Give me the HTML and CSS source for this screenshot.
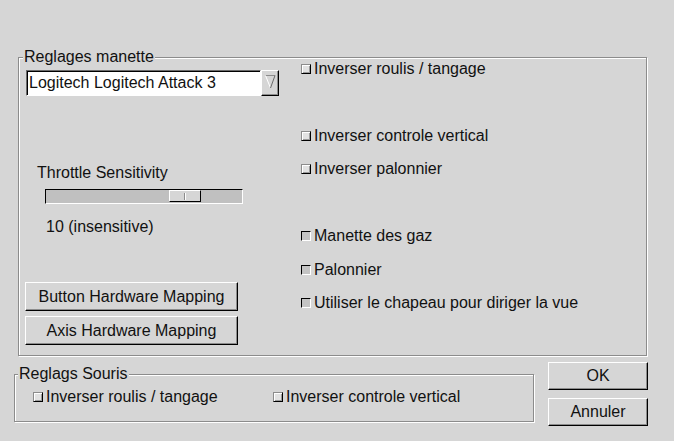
FILE: index.html
```html
<!DOCTYPE html>
<html>
<head>
<meta charset="utf-8">
<link rel="stylesheet" href="styles.css">
</head>
<body>
<div class="dialog">
  <div class="frame main-frame">
    <div class="left-col">
      <div class="legend main-legend">Reglages manette</div>
      <div class="combo">
        <div class="combo-entry">Logitech Logitech Attack 3</div>
        <div class="combo-btn">
          <svg width="11" height="14" viewBox="0 0 11 14">
            <path d="M0.5 0.5 H10" stroke="#8c8c8c" stroke-width="1" fill="none"/>
            <path d="M0.5 0.5 L5.5 13" stroke="#ffffff" stroke-width="1" fill="none"/>
            <path d="M10 0.5 L5.5 13" stroke="#6a6a6a" stroke-width="1" fill="none"/>
          </svg>
        </div>
      </div>
      <div class="label throttle-label">Throttle Sensitivity</div>
      <div class="slider">
        <div class="slider-fill"></div>
        <div class="slider-thumb"><span class="thumb-mark"></span></div>
        <div class="slider-rest"></div>
      </div>
      <div class="label value-label">10 (insensitive)</div>
      <button class="btn map-btn first-map">Button Hardware Mapping</button>
      <button class="btn map-btn second-map">Axis Hardware Mapping</button>
    </div>
    <div class="right-col">
      <div class="row"><span class="cb"></span><span>Inverser roulis / tangage</span></div>
      <div class="row"></div>
      <div class="row"><span class="cb"></span><span>Inverser controle vertical</span></div>
      <div class="row"><span class="cb"></span><span>Inverser palonnier</span></div>
      <div class="row"></div>
      <div class="row"><span class="cb checked"></span><span>Manette des gaz</span></div>
      <div class="row"><span class="cb checked"></span><span>Palonnier</span></div>
      <div class="row"><span class="cb checked"></span><span>Utiliser le chapeau pour diriger la vue</span></div>
    </div>
  </div>
  <div class="bottom">
    <div class="frame mouse-frame">
      <div class="legend mouse-legend">Reglags Souris</div>
      <div class="mouse-row">
        <div class="row mouse-item"><span class="cb"></span><span>Inverser roulis / tangage</span></div>
        <div class="row mouse-item"><span class="cb"></span><span>Inverser controle vertical</span></div>
      </div>
    </div>
    <div class="actions">
      <button class="btn action-btn">OK</button>
      <button class="btn action-btn">Annuler</button>
    </div>
  </div>
</div>
</body>
</html>
```

FILE: styles.css
```css
html, body {
  margin: 0;
  padding: 0;
}
body {
  width: 674px;
  height: 441px;
  overflow: hidden;
  background: #d6d6d6;
  font-family: "Liberation Sans", Arial, sans-serif;
  font-size: 16px;
  line-height: 18px;
  color: #111;
}
.dialog {
  padding-top: 57px;
  padding-left: 14px;
}
.frame {
  box-sizing: border-box;
  border: 1px solid #8c8c8c;
  box-shadow: inset 1px 1px 0 #ffffff, 1px 1px 0 #ffffff;
}
.legend {
  background: #d6d6d6;
  padding: 0 1px;
  margin-top: -10px;
  height: 18px;
  line-height: 18px;
  align-self: flex-start;
}
.main-frame {
  margin-left: 4px;
  width: 629px;
  height: 299px;
  display: flex;
}
.left-col {
  width: 282px;
  box-sizing: border-box;
  padding-left: 7px;
  display: flex;
  flex-direction: column;
  align-items: flex-start;
}
.main-legend {
  margin-left: -3px;
}
.combo {
  margin-top: 4px;
  display: flex;
  height: 26px;
}
.combo-entry {
  box-sizing: border-box;
  width: 235px;
  height: 26px;
  background: #fff;
  border: 1px solid;
  border-color: #6a6a6a #ffffff #ffffff #6a6a6a;
  box-shadow: inset 1px 1px 0 #000;
  padding: 3px 0 0 2px;
  white-space: nowrap;
}
.combo-btn {
  box-sizing: border-box;
  width: 18px;
  height: 26px;
  background: #d6d6d6;
  border: 1px solid;
  border-color: #ffffff #000 #000 #ffffff;
  box-shadow: inset -1px -1px 0 #8c8c8c;
  display: flex;
  align-items: flex-start;
  justify-content: center;
  padding-top: 4px;
}
.label {
  white-space: nowrap;
}
.throttle-label {
  margin-top: 68px;
  margin-left: 11px;
}
.slider {
  margin-top: 7px;
  margin-left: 19px;
  box-sizing: border-box;
  width: 198px;
  height: 15px;
  background: #c0c0c0;
  border: 1px solid;
  border-color: #000 #ffffff #ffffff #000;
  display: flex;
  align-items: flex-start;
}
.slider-fill {
  width: 123px;
}
.slider-thumb {
  box-sizing: border-box;
  width: 32px;
  height: 12px;
  background: #d6d6d6;
  border: 1px solid;
  border-color: #ffffff #000 #000 #ffffff;
  display: flex;
  justify-content: center;
  align-items: center;
}
.thumb-mark {
  width: 1px;
  height: 7px;
  background: #8c8c8c;
  border-right: 1px solid #fff;
}
.value-label {
  margin-top: 14px;
  margin-left: 20px;
}
.btn {
  box-sizing: border-box;
  font-family: "Liberation Sans", Arial, sans-serif;
  font-size: 16px;
  line-height: 18px;
  color: #111;
  background: #d6d6d6;
  border: 1px solid;
  border-color: #ffffff #000 #000 #ffffff;
  box-shadow: inset -1px -1px 0 #8c8c8c;
  padding: 0;
  margin: 0;
  border-radius: 0;
  display: flex;
  align-items: center;
  justify-content: center;
}
.map-btn {
  width: 213px;
  height: 29px;
  margin-left: -1px;
}
.first-map {
  margin-top: 46px;
}
.second-map {
  margin-top: 5px;
}
.right-col {
  margin-top: -6px;
  display: flex;
  flex-direction: column;
}
.row {
  height: 33.5px;
  display: flex;
  align-items: center;
  gap: 3px;
  white-space: nowrap;
}
.cb {
  box-sizing: border-box;
  width: 10px;
  height: 10px;
  flex: none;
  background: #e2e2e2;
  border: 1px solid;
  border-color: #8c8c8c #000 #000 #8c8c8c;
  box-shadow: inset 1px 1px 0 #ffffff, inset -1px -1px 0 #9a9a9a;
}
.cb.checked {
  background: #c4c4c4;
  border-color: #000 #ffffff #ffffff #000;
  box-shadow: none;
}
.bottom {
  margin-top: 6px;
  display: flex;
  align-items: flex-start;
}
.mouse-frame {
  margin-top: 12px;
  width: 520px;
  height: 48px;
  display: flex;
  flex-direction: column;
  padding-left: 0;
}
.mouse-legend {
  margin-left: 3px;
}
.mouse-row {
  display: flex;
  margin-top: 5px;
  padding-left: 18px;
}
.mouse-item {
  height: 18px;
  width: 240px;
}
.actions {
  margin-left: 14px;
  display: flex;
  flex-direction: column;
  gap: 8px;
}
.action-btn {
  width: 100px;
  height: 28px;
}
```
